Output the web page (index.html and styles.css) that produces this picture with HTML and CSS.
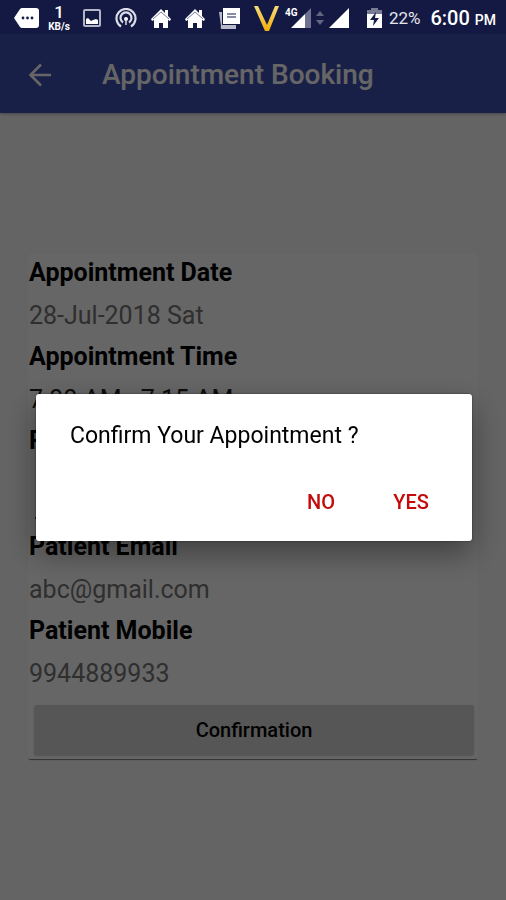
FILE: index.html
```html
<!DOCTYPE html>
<html lang="en">
<head>
<meta charset="utf-8">
<meta name="viewport" content="width=device-width, initial-scale=1">
<title>Appointment Booking</title>
<link rel="stylesheet" href="styles.css">
</head>
<body>
<div class="status">
  <div class="status-group notices">
    <svg width="25" height="20" viewBox="0 0 25 20"><path fill="#fff" d="M8 0h14q3 0 3 3v14q0 3-3 3H8q-1 0-2-1L0 10 6 1q1-1 2-1z"/><g fill="#171c48"><circle cx="9" cy="10" r="1.400"/><circle cx="13.500" cy="10" r="1.400"/><circle cx="18" cy="10" r="1.400"/></g></svg>
    <div class="speed"><span class="speed-value">1</span><span class="speed-unit">KB/s</span></div>
    <svg width="18" height="18" viewBox="0 0 18 18"><rect x="1" y="1" width="16" height="16" rx="1" fill="none" stroke="#b4b6c8" stroke-width="2"/><path fill="#fff" d="M3 15v-5l2-1 3 3 2-1 3-1 2 1v4z"/></svg>
    <svg width="22" height="20" viewBox="0 0 22 20" fill="none" stroke="#dcdde8" stroke-width="2.200"><path d="M6 18.500A9.500 9.500 0 1 1 16 18.500"/><path d="M8 14.500A5.500 5.500 0 1 1 14 14.500"/><circle cx="11" cy="11" r="2" fill="#fff" stroke="none"/><path d="M11 11v6" stroke-width="1.500"/></svg>
    <svg width="20" height="19" viewBox="0 0 20 19"><path fill="#fff" d="M10 0l4 4V1h3v6l3 3-1 2-2-1v8h-5v-5H8v5H3v-8l-2 1-1-2z"/><path fill="none" stroke="#777b99" d="M2 10l8-7 8 7"/></svg>
    <svg width="20" height="19" viewBox="0 0 20 19"><path fill="#fff" d="M10 0l4 4V1h3v6l3 3-1 2-2-1v8h-5v-5H8v5H3v-8l-2 1-1-2z"/><path fill="none" stroke="#777b99" d="M2 10l8-7 8 7"/></svg>
    <svg width="21" height="21" viewBox="0 0 21 21"><path fill="#b9bbcb" d="M0 4h3v13h14v4H3q-2 0-1-3z"/><path fill="#fff" d="M4 0h17v16H4z"/><path stroke="#888ba5" stroke-width="2" d="M8 6h9M8 9h9"/></svg>
    <svg width="25" height="25" viewBox="0 0 25 25"><defs><linearGradient id="gold" x2="0" y2="1"><stop stop-color="#f4dd7b"/><stop offset="1" stop-color="#f5ab09"/></linearGradient></defs><path fill="url(#gold)" d="M0 0h4l9 19 8-19h4L15 25h-4z"/></svg>
  </div>
  <div class="status-group signals">
    <svg width="26" height="22" viewBox="0 0 26 22"><text class="network" x="0" y="9">4G</text><path fill="#6e7190" d="M20 7l6-6v20h-6z"/><path fill="#fff" d="M6 21L20 7v14z"/></svg>
    <svg width="8" height="14" viewBox="0 0 8 14" fill="#626681"><path d="M4 0l4 5H0zM4 14l4-5H0z"/></svg>
    <svg width="20" height="20" viewBox="0 0 20 20"><path fill="#fff" d="M20 0v20H0z"/></svg>
  </div>
  <div class="status-group power">
    <svg width="15" height="20" viewBox="0 0 15 20"><path fill="#777b94" d="M4 0h7v2h4v5H0V2h4z"/><path fill="#fff" d="M0 6h15v14H0z"/><path fill="#171c48" d="M9 4L3 12h4l-1 6 6-8H8z"/></svg>
    <span class="battery">22%</span>
  </div>
  <div class="clock">6:00 <span class="clock-half">PM</span></div>
</div>

<header class="appbar">
  <button class="back" aria-label="Back"><svg width="24" height="24" viewBox="0 0 24 24" fill="none" stroke="#fff" stroke-width="2.600"><path d="M23 12H3M13 1.500L2.500 12 13 22.500"/></svg></button>
  <h1 class="title">Appointment Booking</h1>
</header>

<main class="page">
  <form class="card">
    <h2 class="label">Appointment Date</h2>
    <p class="value">28-Jul-2018 Sat</p>
    <h2 class="label">Appointment Time</h2>
    <p class="value value-dark">7:00 AM - 7:15 AM</p>
    <label class="label" for="patient">Patient Name</label>
    <input class="field" id="patient" type="text">
    <h2 class="label">Patient Email</h2>
    <p class="value">abc@gmail.com</p>
    <h2 class="label">Patient Mobile</h2>
    <p class="value">9944889933</p>
    <button class="confirm" type="button">Confirmation</button>
  </form>
</main>

<div class="scrim">
  <div class="dialog" role="dialog" aria-labelledby="question">
    <p class="question" id="question">Confirm Your Appointment ?</p>
    <div class="actions">
      <button class="action" type="button">NO</button>
      <button class="action" type="button">YES</button>
    </div>
  </div>
</div>
</body>
</html>
```
FILE: styles.css
```css
* {
  box-sizing: border-box;
}

body {
  margin: 0;
  min-height: 100vh;
  background: #fafafa;
  color: #000;
  font-family: Roboto, "Liberation Sans", sans-serif;
}

h1,
h2,
p {
  margin: 0;
}

button {
  border: 0;
  padding: 0;
  background: none;
  font-family: inherit;
}

svg {
  display: block;
  flex: none;
}

.status {
  position: relative;
  z-index: 3;
  display: flex;
  align-items: center;
  height: 34px;
  padding: 2px 10px 0 14px;
  background: #141943;
  color: #fff;
  white-space: nowrap;
}

.status-group {
  display: flex;
  align-items: center;
}

.notices {
  gap: 14px;
}

.signals {
  gap: 5px;
  margin-left: 6px;
}

.power {
  gap: 7px;
  margin-left: 18px;
}

.speed {
  display: flex;
  flex-direction: column;
  align-items: center;
  width: 22px;
  margin-right: -1px;
  margin-left: -5px;
}

.speed-value {
  font-size: 17px;
  font-weight: 500;
  line-height: 17px;
}

.speed-unit {
  font-size: 10px;
  font-weight: 700;
  line-height: 12px;
}

.network {
  fill: #fff;
  font-size: 10px;
  font-weight: 700;
}

.battery {
  color: #e4e4ec;
  font-size: 17px;
}

.clock {
  margin-left: auto;
  font-size: 20px;
  font-weight: 500;
}

.clock-half {
  font-size: 14px;
}

.appbar {
  display: flex;
  align-items: center;
  gap: 50px;
  height: 79px;
  padding: 2px 28px 0;
  background: #3f51b5;
  box-shadow: 0 1px 3px rgba(0, 0, 0, 0.3);
  color: #fff;
}

.title {
  font-size: 28px;
  font-weight: 500;
}

.page {
  padding: 140px 28px;
}

.card {
  display: flex;
  flex-direction: column;
  padding-bottom: 4px;
  border-radius: 2px;
  background: #fff;
  box-shadow: 0 2px 1px -1px rgba(0, 0, 0, 0.5), 0 0 1px rgba(0, 0, 0, 0.15);
}

.label,
.value {
  padding-left: 1px;
  font-size: 25px;
  line-height: 42px;
}

.label {
  margin-top: -1px;
  margin-bottom: 1px;
  font-weight: 700;
}

.value {
  color: #757575;
}

.value-dark {
  color: #212121;
}

.field {
  height: 56px;
  margin: 0 7px 8px;
  border: 0;
  border-bottom: 2px solid #444;
  background: none;
  font: inherit;
}

.confirm {
  height: 50px;
  margin: 10px 4px 0 6px;
  border-radius: 3px;
  background: #d6d7d7;
  box-shadow: 0 1px 2px rgba(0, 0, 0, 0.2);
  font-size: 20px;
  font-weight: 500;
}

.scrim {
  position: fixed;
  inset: 0;
  z-index: 2;
  display: flex;
  align-items: center;
  justify-content: center;
  padding: 34px 34px 0 36px;
  background: rgba(0, 0, 0, 0.6);
}

.dialog {
  flex: 1;
  padding: 24px 24px 14px 34px;
  border-radius: 3px;
  background: #fff;
  box-shadow: 0 0 2px rgba(0, 0, 0, 0.6), 0 12px 32px rgba(0, 0, 0, 0.4);
}

.question {
  font-size: 23px;
  line-height: 36px;
}

.actions {
  display: flex;
  justify-content: flex-end;
  gap: 16px;
  margin-top: 24px;
}

.action {
  min-width: 74px;
  height: 49px;
  color: #c40a0a;
  font-size: 20px;
  font-weight: 500;
}
```
